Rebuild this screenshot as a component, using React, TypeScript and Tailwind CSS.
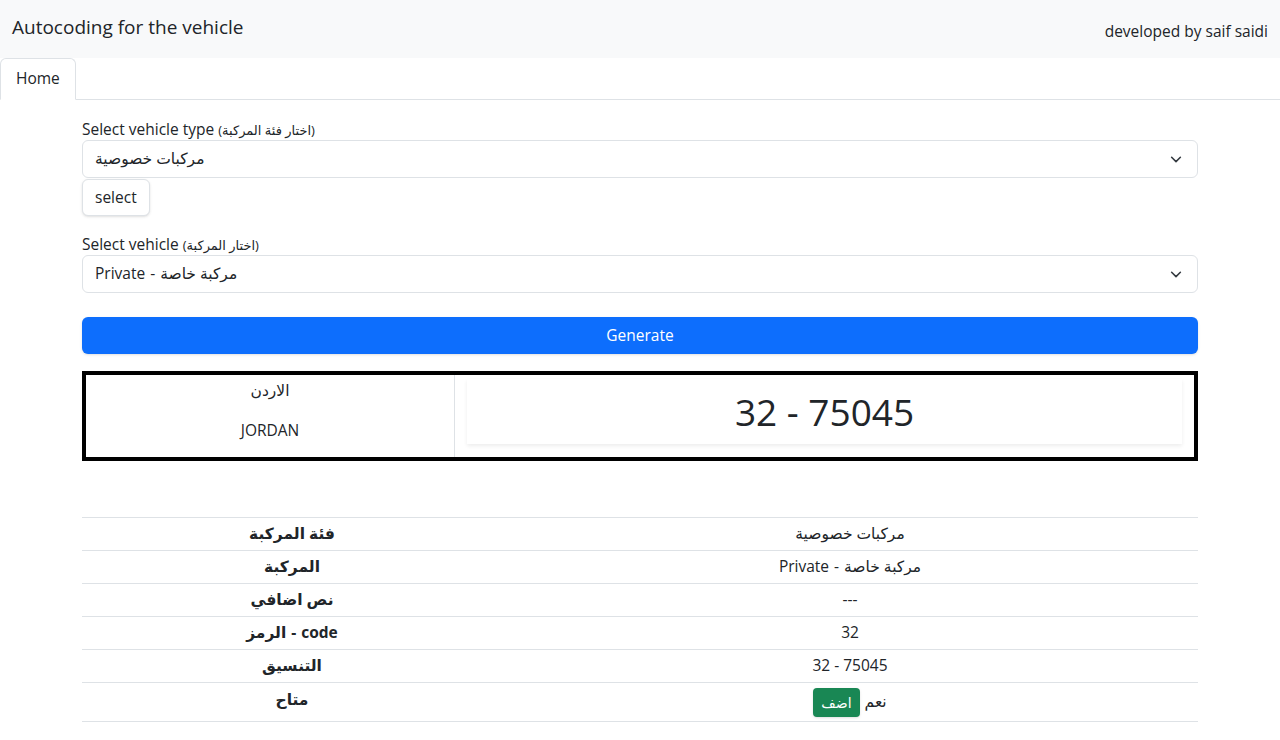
import React from 'react';

const font = { fontFamily: '"Open Sans", "Noto Sans", "DejaVu Sans", sans-serif' };

// pieces listed left to right, as they appear on screen
const rows: { label: string[]; value: string[] }[] = [
  { label: ['فئة المركبة'], value: ['مركبات خصوصية'] },
  { label: ['المركبة'], value: ['Private', '-', 'مركبة خاصة'] },
  { label: ['نص اضافي'], value: ['---'] },
  { label: ['الرمز', '-', 'code'], value: ['32'] },
  { label: ['التنسيق'], value: ['32 - 75045'] },
];

const Pieces = ({ items }: { items: string[] }) => (
  <span className="inline-flex items-center gap-[5px]">
    {items.map((t, i) => (
      <span key={i}>{t}</span>
    ))}
  </span>
);

const Chevron = () => (
  <svg width="14" height="14" viewBox="0 0 16 16" fill="none" stroke="#343a40" strokeWidth="1.8" strokeLinecap="round" strokeLinejoin="round">
    <path d="M3 6l5 5 5-5" />
  </svg>
);

const SelectBox = ({ value }: { value: string[] }) => (
  <div className="flex items-center justify-between h-[38px] border border-[#dee2e6] rounded-[6px] px-3 bg-white">
    <span className="text-[15.5px] text-[#212529]"><Pieces items={value} /></span>
    <span className="mr-[2px] flex"><Chevron /></span>
  </div>
);

export default function App() {
  return (
    <div className="min-h-screen bg-white text-[#212529]" style={font}>
      {/* navbar */}
      <div className="h-[58px] bg-[#f8f9fa] flex items-start justify-between px-3">
        <div className="text-[19px] mt-[13px] leading-[28px]">Autocoding for the vehicle</div>
        <div className="text-[15.5px] mt-[19px] leading-[24px]">developed by saif saidi</div>
      </div>

      {/* tabs */}
      <div className="flex border-b border-[#dee2e6] h-[42px]">
        <div className="h-[42px] px-[15px] border border-[#dee2e6] border-b-white rounded-t-[6px] bg-white flex items-center text-[15.5px] -mb-px">
          Home
        </div>
      </div>

      <div className="w-[1116px] mx-auto pt-[18px]">
        <div className="text-[15.5px] leading-[22px] h-[22px]">
          Select vehicle type <span className="text-[13px]">(اختار فئة المركبة)</span>
        </div>
        <SelectBox value={['مركبات خصوصية']} />
        <button className="mt-px h-[37px] px-3 border border-[#dee2e6] rounded-[6px] bg-white text-[15.5px] shadow-sm">select</button>

        <div className="text-[15.5px] leading-[22px] h-[22px] mt-[17px]">
          Select vehicle <span className="text-[13px]">(اختار المركبة)</span>
        </div>
        <SelectBox value={['Private', '-', 'مركبة خاصة']} />

        <button className="mt-[24px] w-full h-[37px] rounded-[6px] bg-[#0d6efd] text-white text-[15.5px] shadow-sm">Generate</button>

        {/* plate */}
        <div className="mt-[17px] border-4 border-black flex h-[90px]">
          <div className="w-[369px] border-r border-[#dee2e6] flex flex-col items-center text-[15.5px]">
            <div className="mt-[3px] leading-[24px]">الاردن</div>
            <div className="mt-[16px] leading-[24px]">JORDAN</div>
          </div>
          <div className="flex-1 px-3 pt-[4px]">
            <div className="h-[65px] bg-white shadow-[0_2px_4px_rgba(0,0,0,0.075)] flex items-center justify-center text-[37px]">
              32 - 75045
            </div>
          </div>
        </div>

        {/* table */}
        <table className="mt-[56px] w-full text-[15.5px] border-collapse">
          <tbody>
            {rows.map((r, i) => (
              <tr key={i} className="border-t border-b border-[#dee2e6]">
                <td className="w-[420px] text-center font-bold h-[33px] py-0"><Pieces items={r.label} /></td>
                <td className="text-center h-[33px] py-0"><Pieces items={r.value} /></td>
              </tr>
            ))}
            <tr className="border-b border-[#dee2e6]">
              <td className="w-[420px] text-center font-bold h-[39px] align-middle pb-[4px]">متاح</td>
              <td className="text-center h-[39px]">
                <span className="inline-flex items-center gap-[5px]">
                  <span className="inline-flex items-center h-[29px] px-2 bg-[#198754] text-white text-[14px] rounded-[4px] shadow-sm">اضف</span>
                  <span>نعم</span>
                </span>
              </td>
            </tr>
          </tbody>
        </table>
      </div>
    </div>
  );
}
